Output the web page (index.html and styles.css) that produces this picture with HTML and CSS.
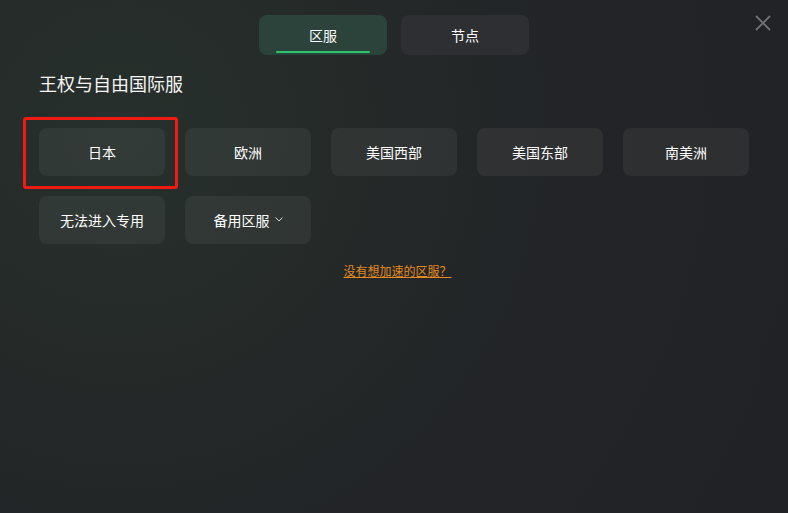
FILE: index.html
```html
<!DOCTYPE html>
<html lang="zh-CN">
<head>
  <meta charset="UTF-8" />
  <title>区服选择</title>
  <link rel="stylesheet" href="styles.css">
</head>
<body>
  <div class="panel">
    <div class="tabs">
      <button class="tab active">区服</button>
      <button class="tab">节点</button>
    </div>
    <svg class="close" width="16" height="16" viewBox="0 0 16 16">
      <path d="M1 1 L15 15 M15 1 L1 15" stroke="#707276" stroke-width="1.8" fill="none"/>
    </svg>

    <h2 class="game-title">王权与自由国际服</h2>

    <div class="regions">
      <button class="region marked">日本<span class="mark"></span></button>
      <button class="region">欧洲</button>
      <button class="region">美国西部</button>
      <button class="region">美国东部</button>
      <button class="region">南美洲</button>
      <button class="region">无法进入专用</button>
      <button class="region">备用区服
        <svg class="chev" width="8" height="5" viewBox="0 0 8 5">
          <path d="M0.5 0.5 L4 4 L7.5 0.5" stroke="#d8d9db" stroke-width="1" fill="none"/>
        </svg>
      </button>
    </div>

    <div class="more">
      <a href="#">没有想加速的区服？</a>
    </div>
  </div>
</body>
</html>
```

FILE: styles.css
```css
body {
  margin: 0;
  width: 788px;
  height: 513px;
  overflow: hidden;
  background: radial-gradient(circle at 120px 130px, #27302c 0%, #252b29 25%, #222427 60%, #212226 100%);
  color: #ffffff;
  font-family: "Noto Sans CJK SC", "Noto Sans", sans-serif;
}

.panel {
  position: relative;
  padding: 15px 39px 0 39px;
}

.tabs {
  display: flex;
  justify-content: center;
  gap: 14px;
}

.tab {
  position: relative;
  width: 128px;
  height: 40px;
  border: none;
  border-radius: 8px;
  background-color: #2d2f33;
  color: #ffffff;
  font-family: inherit;
  font-size: 14px;
  padding: 0;
}

.tab.active {
  background-color: #2b433a;
}

.tab.active::after {
  content: "";
  position: absolute;
  left: 17px;
  right: 17px;
  bottom: 2px;
  height: 2px;
  border-radius: 1px;
  background-color: #2ec46d;
}

.close {
  position: absolute;
  top: 15px;
  right: 17px;
}

.game-title {
  margin: 16px 0 0 0;
  font-size: 18px;
  font-weight: normal;
  line-height: 24px;
  color: #f4f4f5;
}

.regions {
  display: grid;
  grid-template-columns: repeat(5, 126px);
  gap: 20px;
  margin-top: 33px;
}

.region {
  position: relative;
  height: 48px;
  border: none;
  border-radius: 8px;
  background-color: rgba(255, 255, 255, 0.055);
  color: #ffffff;
  font-family: inherit;
  font-size: 14px;
  padding: 0;
  display: flex;
  align-items: center;
  justify-content: center;
  gap: 5px;
}

.mark {
  position: absolute;
  top: -11px;
  left: -16px;
  right: -13px;
  bottom: -13px;
  border: 3px solid #f01c14;
  border-radius: 3px;
}

.chev {
  margin-top: -2px;
}

.more {
  text-align: center;
  margin-top: 18px;
  padding-left: 7px;
  font-size: 12px;
  line-height: 18px;
}

.more a {
  color: #e58a1f;
  text-decoration: underline;
}
```
